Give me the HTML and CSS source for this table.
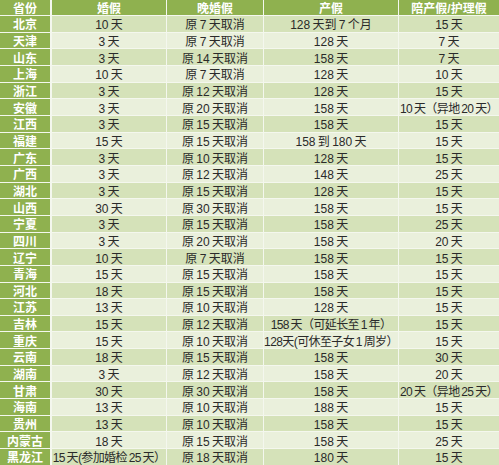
FILE: index.html
```html
<!DOCTYPE html>
<html lang="zh-CN">
<head>
<meta charset="utf-8">
<title>各省婚假产假一览</title>
<link rel="stylesheet" href="styles.css">
</head>
<body>
<div class="tbl">
  <div class="row head"><span>省份</span><span>婚假</span><span>晚婚假</span><span>产假</span><span>陪产假/护理假</span></div>
  <div class="row"><span>北京</span><span>10 天</span><span>原 7 天取消</span><span>128 天到 7 个月</span><span>15 天</span></div>
  <div class="row"><span>天津</span><span>3 天</span><span>原 7 天取消</span><span>128 天</span><span>7 天</span></div>
  <div class="row"><span>山东</span><span>3 天</span><span>原 14 天取消</span><span>158 天</span><span>7 天</span></div>
  <div class="row"><span>上海</span><span>10 天</span><span>原 7 天取消</span><span>128 天</span><span>10 天</span></div>
  <div class="row"><span>浙江</span><span>3 天</span><span>原 12 天取消</span><span>128 天</span><span>15 天</span></div>
  <div class="row"><span>安徽</span><span>3 天</span><span>原 20 天取消</span><span>158 天</span><span class="tight">10 天（异地 20 天）</span></div>
  <div class="row"><span>江西</span><span>3 天</span><span>原 15 天取消</span><span>158 天</span><span>15 天</span></div>
  <div class="row"><span>福建</span><span>15 天</span><span>原 15 天取消</span><span>158 到 180 天</span><span>15 天</span></div>
  <div class="row"><span>广东</span><span>3 天</span><span>原 10 天取消</span><span>128 天</span><span>15 天</span></div>
  <div class="row"><span>广西</span><span>3 天</span><span>原 12 天取消</span><span>148 天</span><span>25 天</span></div>
  <div class="row"><span>湖北</span><span>3 天</span><span>原 15 天取消</span><span>128 天</span><span>15 天</span></div>
  <div class="row"><span>山西</span><span>30 天</span><span>原 30 天取消</span><span>158 天</span><span>15 天</span></div>
  <div class="row"><span>宁夏</span><span>3 天</span><span>原 15 天取消</span><span>158 天</span><span>25 天</span></div>
  <div class="row"><span>四川</span><span>3 天</span><span>原 20 天取消</span><span>158 天</span><span>20 天</span></div>
  <div class="row"><span>辽宁</span><span>10 天</span><span>原 7 天取消</span><span>158 天</span><span>15 天</span></div>
  <div class="row"><span>青海</span><span>15 天</span><span>原 15 天取消</span><span>158 天</span><span>15 天</span></div>
  <div class="row"><span>河北</span><span>18 天</span><span>原 15 天取消</span><span>158 天</span><span>15 天</span></div>
  <div class="row"><span>江苏</span><span>13 天</span><span>原 10 天取消</span><span>128 天</span><span>15 天</span></div>
  <div class="row"><span>吉林</span><span>15 天</span><span>原 12 天取消</span><span class="tight">158 天（可延长至 1 年）</span><span>15 天</span></div>
  <div class="row"><span>重庆</span><span>15 天</span><span>原 10 天取消</span><span class="tight">128天(可休至子女 1 周岁）</span><span>15 天</span></div>
  <div class="row"><span>云南</span><span>18 天</span><span>原 15 天取消</span><span>158 天</span><span>30 天</span></div>
  <div class="row"><span>湖南</span><span>3 天</span><span>原 12 天取消</span><span>158 天</span><span>20 天</span></div>
  <div class="row"><span>甘肃</span><span>30 天</span><span>原 30 天取消</span><span>158 天</span><span class="tight">20 天（异地 25 天）</span></div>
  <div class="row"><span>海南</span><span>13 天</span><span>原 10 天取消</span><span>188 天</span><span>15 天</span></div>
  <div class="row"><span>贵州</span><span>13 天</span><span>原 10 天取消</span><span>158 天</span><span>15 天</span></div>
  <div class="row"><span>内蒙古</span><span>18 天</span><span>原 15 天取消</span><span>158 天</span><span>25 天</span></div>
  <div class="row"><span>黑龙江</span><span class="tight">15 天(参加婚检 25 天）</span><span>原 18 天取消</span><span>180 天</span><span>15 天</span></div>
</div>
</body>
</html>
```

FILE: styles.css
```css
html, body {
  margin: 0;
  padding: 0;
  background: #ffffff;
}

.tbl {
  display: grid;
  width: 499px;
  grid-template-columns: 51px 114px 96px 134px 100px;
  grid-template-rows: 15px;
  grid-auto-rows: 15.667px;
  gap: 1px;
  background: #f4f7ee;
  font-family: "Liberation Sans", "Noto Sans CJK SC", sans-serif;
  font-size: 12px;
  color: #2a2a2a;
}

.row {
  display: contents;
}

.row > span {
  display: flex;
  align-items: center;
  justify-content: center;
  white-space: nowrap;
  overflow: visible;
  background: #eaf0dc;
  word-spacing: -1px;
}

.row:nth-child(even) > span {
  background: #d5e2b9;
}

.row > span:first-child {
  background: #8fb14f;
  color: #ffffff;
  font-weight: bold;
  border-right: 1px solid #f4f7ee;
}

.head > span,
.head > span:first-child {
  background: #8fb14f;
  color: #ffffff;
  font-weight: bold;
}

.tight {
  letter-spacing: -0.6px;
  word-spacing: -2px;
}
```
